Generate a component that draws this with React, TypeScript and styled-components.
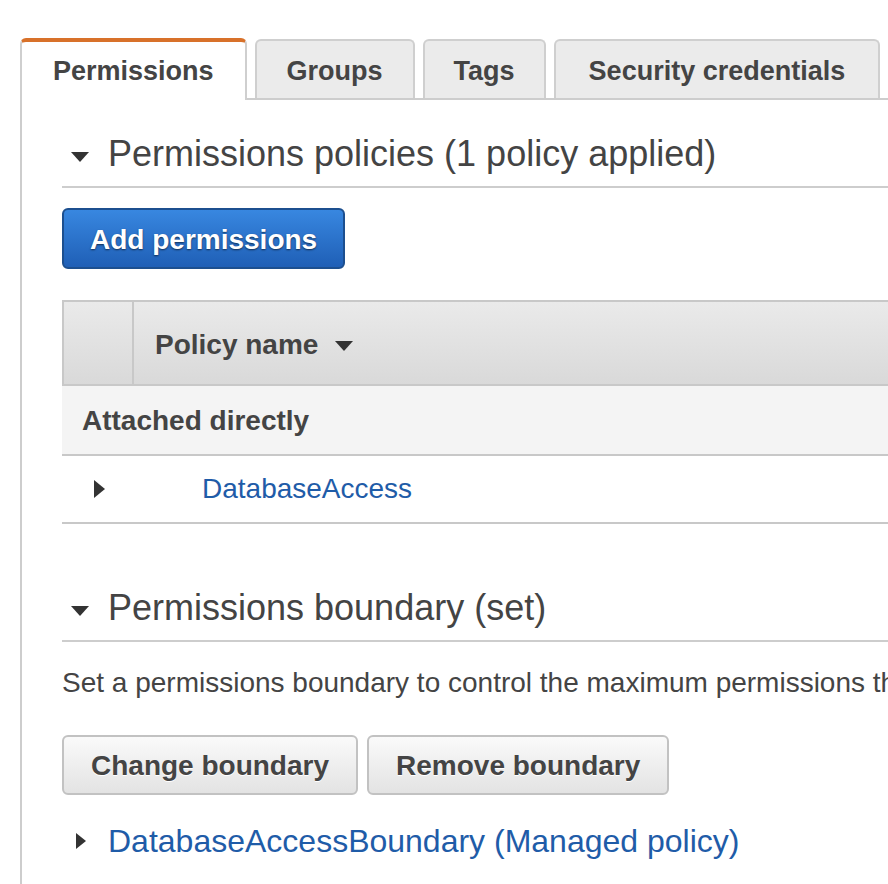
import React from "react";
import styled, { createGlobalStyle } from "styled-components";

const Global = createGlobalStyle`
  html, body { margin: 0; padding: 0; background: #fff; overflow: hidden; }
  body { font-family: "Liberation Sans", Arial, Helvetica, sans-serif; color: #444; }
  * { box-sizing: border-box; }
`;

const Page = styled.div`
  width: 1300px;
  padding: 38px 0 0 20px;
`;

const TabBar = styled.div`
  display: flex;
  align-items: flex-end;
  gap: 8px;
  border-bottom: 2px solid #cdcdcd;
`;

const Tab = styled.div<{ $active?: boolean; $pad?: number }>`
  height: ${(p) => (p.$active ? 62 : 59)}px;
  margin-bottom: ${(p) => (p.$active ? -2 : 0)}px;
  padding: ${(p) => (p.$active ? 0 : 3)}px ${(p) => p.$pad ?? 30}px 0;
  display: flex;
  align-items: center;
  border: 2px solid #cfcfcf;
  border-bottom: none;
  border-top: ${(p) => (p.$active ? "4px solid #d8712a" : "2px solid #cfcfcf")};
  border-radius: 6px 6px 0 0;
  background: ${(p) => (p.$active ? "#fff" : "#ebebeb")};
  font-weight: bold;
  font-size: 27px;
  color: #444;
  white-space: nowrap;
`;

const Panel = styled.div`
  border-left: 2px solid #cdcdcd;
  padding: 0 0 40px 40px;
  display: flex;
  flex-direction: column;
`;

const SectionHeader = styled.div<{ $top: number }>`
  margin-top: ${(p) => p.$top}px;
  display: flex;
  align-items: center;
  padding-bottom: 11px;
  border-bottom: 2px solid #cdcdcd;
`;

const DownCaret = styled.span`
  width: 0;
  height: 0;
  border-left: 9px solid transparent;
  border-right: 9px solid transparent;
  border-top: 10px solid #333;
  margin: 6px 19px 0 9px;
`;

const HeadingText = styled.h2`
  margin: 0;
  font-weight: normal;
  font-size: 36px;
  line-height: 42px;
  color: #444;
  white-space: nowrap;
`;

const PrimaryButton = styled.button`
  align-self: flex-start;
  margin-top: 20px;
  height: 61px;
  padding: 3px 26px 0;
  border: 2px solid #1c4f8f;
  border-radius: 6px;
  background: linear-gradient(#3887e0, #1f5fb6);
  color: #fff;
  font-family: inherit;
  font-weight: bold;
  font-size: 28px;
  text-shadow: 0 1px 2px rgba(0, 0, 0, 0.6);
  cursor: pointer;
`;

const Table = styled.div`
  margin-top: 31px;
  display: flex;
  flex-direction: column;
`;

const HeadRow = styled.div`
  display: flex;
  height: 86px;
  border-top: 2px solid #c8c8c8;
  border-bottom: 2px solid #c8c8c8;
  border-left: 2px solid #c8c8c8;
  background: linear-gradient(#eaeaea, #d9d9d9);
`;

const HeadSpacer = styled.div`
  width: 70px;
  border-right: 2px solid #c8c8c8;
`;

const HeadCell = styled.div`
  display: flex;
  align-items: center;
  padding: 3px 0 0 21px;
  font-weight: bold;
  font-size: 28px;
  color: #444;
`;

const SortCaret = styled.span`
  width: 0;
  height: 0;
  border-left: 9px solid transparent;
  border-right: 9px solid transparent;
  border-top: 10px solid #333;
  margin: 2px 0 0 17px;
`;

const GroupRow = styled.div`
  height: 70px;
  display: flex;
  align-items: center;
  padding: 2px 0 0 20px;
  background: #f4f4f4;
  border-bottom: 2px solid #c8c8c8;
  font-weight: bold;
  font-size: 28px;
  color: #444;
`;

const DataRow = styled.div`
  height: 68px;
  display: flex;
  align-items: center;
  border-bottom: 2px solid #c8c8c8;
`;

const ExpandCell = styled.div`
  width: 140px;
  padding-left: 32px;
  display: flex;
  align-items: center;
`;

const RightCaret = styled.span<{ $size?: number }>`
  width: 0;
  height: 0;
  border-top: ${(p) => (p.$size ?? 9)}px solid transparent;
  border-bottom: ${(p) => (p.$size ?? 9)}px solid transparent;
  border-left: ${(p) => Math.round((p.$size ?? 9) * 1.2)}px solid #333;
`;

const Link = styled.a<{ $size?: number }>`
  color: #1f5ca8;
  text-decoration: none;
  font-size: ${(p) => p.$size ?? 28}px;
  white-space: nowrap;
  cursor: pointer;
`;

const Description = styled.p`
  margin: 24px 0 0;
  font-size: 28px;
  line-height: 34px;
  color: #444;
  white-space: nowrap;
`;

const ButtonRow = styled.div`
  margin-top: 35px;
  display: flex;
  gap: 9px;
`;

const SecondaryButton = styled.button`
  height: 60px;
  padding: 2px 27px 0;
  border: 2px solid #c2c2c2;
  border-radius: 6px;
  background: linear-gradient(#fafafa, #e3e3e3);
  color: #444;
  font-family: inherit;
  font-weight: bold;
  font-size: 28px;
  text-shadow: 0 1px 0 #fff;
  cursor: pointer;
`;

const BoundaryRow = styled.div`
  margin-top: 27px;
  height: 38px;
  display: flex;
  align-items: center;
  padding-left: 14px;
  gap: 22px;
`;

export default function App() {
  return (
    <>
      <Global />
      <Page>
        <TabBar>
          <Tab $active $pad={31}>Permissions</Tab>
          <Tab>Groups</Tab>
          <Tab $pad={29}>Tags</Tab>
          <Tab $pad={33}>Security credentials</Tab>
        </TabBar>
        <Panel>
          <SectionHeader $top={33}>
            <DownCaret />
            <HeadingText>Permissions policies (1 policy applied)</HeadingText>
          </SectionHeader>
          <PrimaryButton>Add permissions</PrimaryButton>
          <Table>
            <HeadRow>
              <HeadSpacer />
              <HeadCell>
                Policy name
                <SortCaret />
              </HeadCell>
            </HeadRow>
            <GroupRow>Attached directly</GroupRow>
            <DataRow>
              <ExpandCell>
                <RightCaret />
              </ExpandCell>
              <Link>DatabaseAccess</Link>
            </DataRow>
          </Table>
          <SectionHeader $top={63}>
            <DownCaret />
            <HeadingText>Permissions boundary (set)</HeadingText>
          </SectionHeader>
          <Description>
            Set a permissions boundary to control the maximum permissions this user can have.
          </Description>
          <ButtonRow>
            <SecondaryButton>Change boundary</SecondaryButton>
            <SecondaryButton>Remove boundary</SecondaryButton>
          </ButtonRow>
          <BoundaryRow>
            <RightCaret $size={8} />
            <Link $size={32}>DatabaseAccessBoundary (Managed policy)</Link>
          </BoundaryRow>
        </Panel>
      </Page>
    </>
  );
}
